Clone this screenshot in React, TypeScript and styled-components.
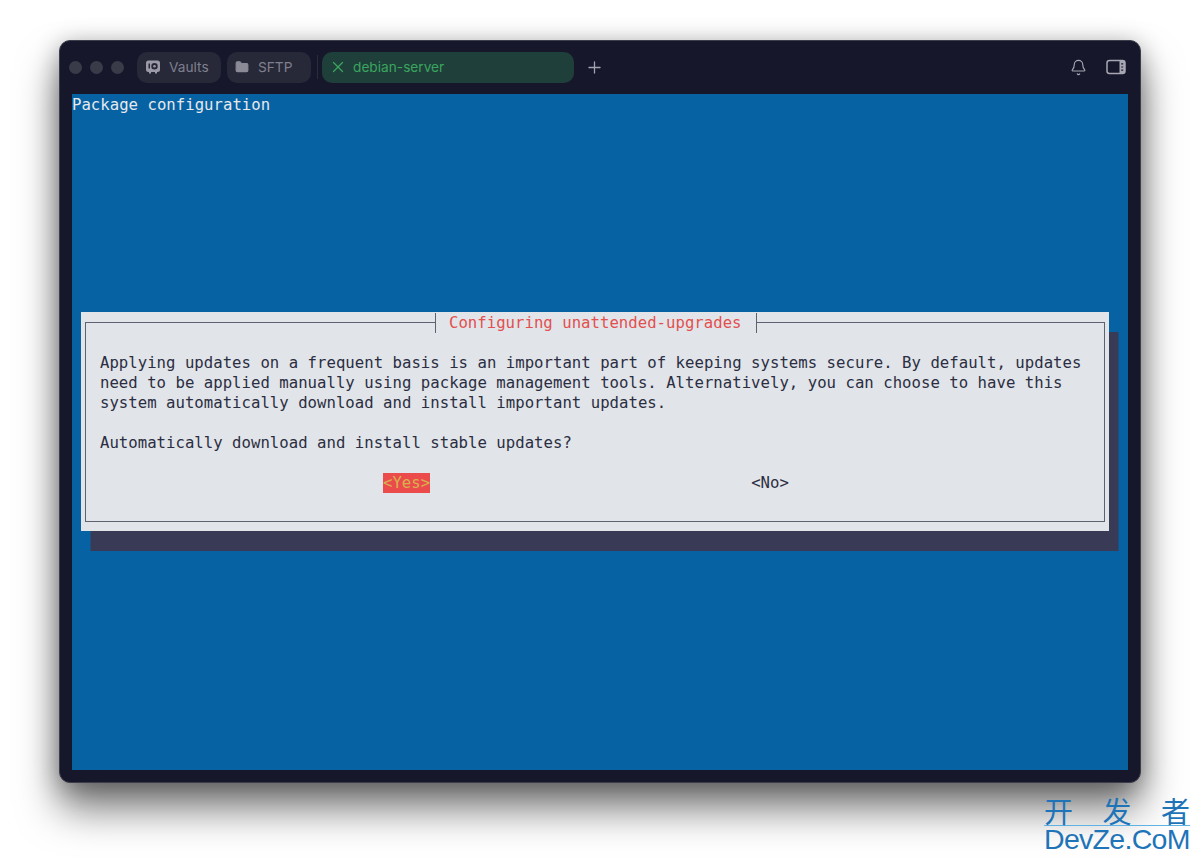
import React from "react";
import styled, { createGlobalStyle } from "styled-components";
import { Bell, Folder, Plus, X } from "lucide-react";

const Global = createGlobalStyle`
  html, body { margin: 0; padding: 0; background: #fff; }
  #root { width: 1200px; height: 860px; overflow: hidden; position: relative; }
`;

const Page = styled.div`
  box-sizing: border-box;
  width: 1200px;
  height: 860px;
  padding: 40px 59px 0;
`;

const Window = styled.div`
  box-sizing: border-box;
  width: 1082px;
  height: 743px;
  display: flex;
  flex-direction: column;
  background: #17172b;
  border: 1px solid #3c3d4b;
  border-radius: 11px;
  box-shadow: 0 26px 40px rgba(0, 0, 0, 0.52), 0 4px 24px rgba(0, 0, 0, 0.3);
  padding: 0 12px 12px;
`;

const Toolbar = styled.div`
  height: 53px;
  flex: none;
  display: flex;
  align-items: center;
  padding-bottom: 1px;
  box-sizing: border-box;
`;

const Lights = styled.div`
  display: flex;
  gap: 8px;
  margin: 0 13px 0 -3px;
`;

const Light = styled.span`
  width: 13px;
  height: 13px;
  border-radius: 50%;
  background: #3a3b49;
`;

const Tab = styled.div<{ $w: number; $active?: boolean; $gap: number; $pad: number }>`
  box-sizing: border-box;
  width: ${(p) => p.$w}px;
  height: 31px;
  border-radius: 10px;
  display: flex;
  align-items: center;
  gap: ${(p) => p.$gap}px;
  padding-left: ${(p) => p.$pad}px;
  background: ${(p) => (p.$active ? "#1f3f3a" : "#272838")};
  color: ${(p) => (p.$active ? "#3ba55f" : "#7f808e")};
  font: 13.7px Inter, "Noto Sans", sans-serif;
  margin-right: 6px;
`;

const Divider = styled.span`
  width: 1px;
  height: 24px;
  background: #2c2d3c;
  margin-right: 4px;
`;

const AddButton = styled.span`
  display: flex;
  color: #a3a4b0;
  margin-left: 5px;
`;

const Spacer = styled.div`
  flex: 1;
`;

const ToolIcon = styled.span<{ $gap: number }>`
  display: flex;
  color: #a6a7b2;
  margin-left: ${(p) => p.$gap}px;
`;

const EndGap = styled.span`
  width: 2px;
`;

const Terminal = styled.div`
  flex: 1;
  background: #0762a3;
  color: #e6e9ec;
  font: 15.65px/20px "DejaVu Sans Mono", "Liberation Mono", monospace;
  letter-spacing: 0.02px;
  white-space: pre;
`;

const Header = styled.div`
  box-sizing: border-box;
  height: 20px;
  padding-top: 1px;
`;

const Dialog = styled.div`
  box-sizing: border-box;
  width: 1028px;
  height: 219px;
  margin: 198px 0 0 9px;
  padding: 10px 4px 9px;
  background: #e1e4e8;
  box-shadow: 9.5px 20px 0 #393a55;
  color: #2b2e42;
`;

const Frame = styled.div`
  position: relative;
  box-sizing: border-box;
  height: 200px;
  border: 1px solid #5c6270;
  padding: 30px 14px 0;
`;

const Title = styled.div`
  position: absolute;
  top: -10px;
  left: 349px;
  height: 20px;
  padding: 0 14px 0 13px;
  background: #e1e4e8;
  border-left: 1px solid #5c6270;
  border-right: 1px solid #5c6270;
  color: #e2504f;
`;

const Message = styled.div`
  min-height: 20px;
`;

const Buttons = styled.div`
  display: flex;
  padding-left: 283px;
  gap: 321px;
`;

const Action = styled.span<{ $focus?: boolean }>`
  background: ${(p) => (p.$focus ? "#ec4b4c" : "transparent")};
  color: ${(p) => (p.$focus ? "#d6b24c" : "#2b2e42")};
`;

const Mark = styled.div`
  position: absolute;
  left: 1044px;
  top: 795px;
  width: 146px;
  color: #1f74b8;
`;

const MarkCn = styled.div`
  display: flex;
  justify-content: space-between;
  font: 29px/30px "Noto Sans CJK SC", sans-serif;
  border-bottom: 1px solid #5eb2e4;
`;

const MarkEn = styled.div`
  font: 28.5px/27px "Liberation Sans", sans-serif;
  letter-spacing: -0.7px;
  white-space: nowrap;
`;

const VaultIcon = () => (
  <svg width="16" height="16" viewBox="0 0 16 16">
    <path
      fillRule="evenodd"
      fill="#9a9ba6"
      d="M3.5 1.5h9A2.5 2.5 0 0 1 15 4v6.5A2.5 2.5 0 0 1 12.5 13H12v1.5h-2V13H6v1.5H4V13h-.5A2.5 2.5 0 0 1 1 10.500V4a2.500 2.500 0 0 1 2.500-2.500ZM9.500 4a3.200 3.200 0 1 0 0 6.400 3.200 3.200 0 0 0 0-6.400ZM3.500 4.500v5h1.500v-5Z"
    />
    <circle cx="9.500" cy="7.200" r="1.300" fill="#9a9ba6" />
  </svg>
);

const PanelIcon = () => (
  <svg width="20" height="16" viewBox="0 0 20 16" fill="none">
    <rect x="1" y="1.500" width="18" height="13" rx="2.500" stroke="#a6a7b2" strokeWidth="1.500" />
    <path d="M13.500 1.500H17a2 2 0 0 1 2 2v9a2 2 0 0 1-2 2h-3.500Z" fill="#a6a7b2" />
    <path d="M15.200 4.800h2M15.200 8h2M15.200 11.200h2" stroke="#17172b" strokeWidth="1.200" />
  </svg>
);

export default function App() {
  return (
    <Page>
      <Global />
      <Window>
        <Toolbar>
          <Lights>
            <Light />
            <Light />
            <Light />
          </Lights>
          <Tab $w={84} $gap={8} $pad={8}>
            <VaultIcon />
            Vaults
          </Tab>
          <Tab $w={84} $gap={9} $pad={8}>
            <Folder size={14} fill="#8a8b97" stroke="#8a8b97" />
            SFTP
          </Tab>
          <Divider />
          <Tab $w={252} $active $gap={6} $pad={7}>
            <X size={18} strokeWidth={1.700} />
            debian-server
          </Tab>
          <AddButton>
            <Plus size={19} strokeWidth={1.600} />
          </AddButton>
          <Spacer />
          <ToolIcon $gap={0}>
            <Bell size={17} strokeWidth={1.600} />
          </ToolIcon>
          <ToolIcon $gap={19}>
            <PanelIcon />
          </ToolIcon>
          <EndGap />
        </Toolbar>
        <Terminal>
          <Header>Package configuration</Header>
          <Dialog>
            <Frame>
              <Title>Configuring unattended-upgrades</Title>
              <Message>Applying updates on a frequent basis is an important part of keeping systems secure. By default, updates</Message>
              <Message>need to be applied manually using package management tools. Alternatively, you can choose to have this</Message>
              <Message>system automatically download and install important updates.</Message>
              <Message />
              <Message>Automatically download and install stable updates?</Message>
              <Message />
              <Buttons>
                <Action $focus>{"<Yes>"}</Action>
                <Action>{"<No>"}</Action>
              </Buttons>
            </Frame>
          </Dialog>
        </Terminal>
      </Window>
      <Mark>
        <MarkCn>
          <span>开</span>
          <span>发</span>
          <span>者</span>
        </MarkCn>
        <MarkEn>DevZe.CoM</MarkEn>
      </Mark>
    </Page>
  );
}
